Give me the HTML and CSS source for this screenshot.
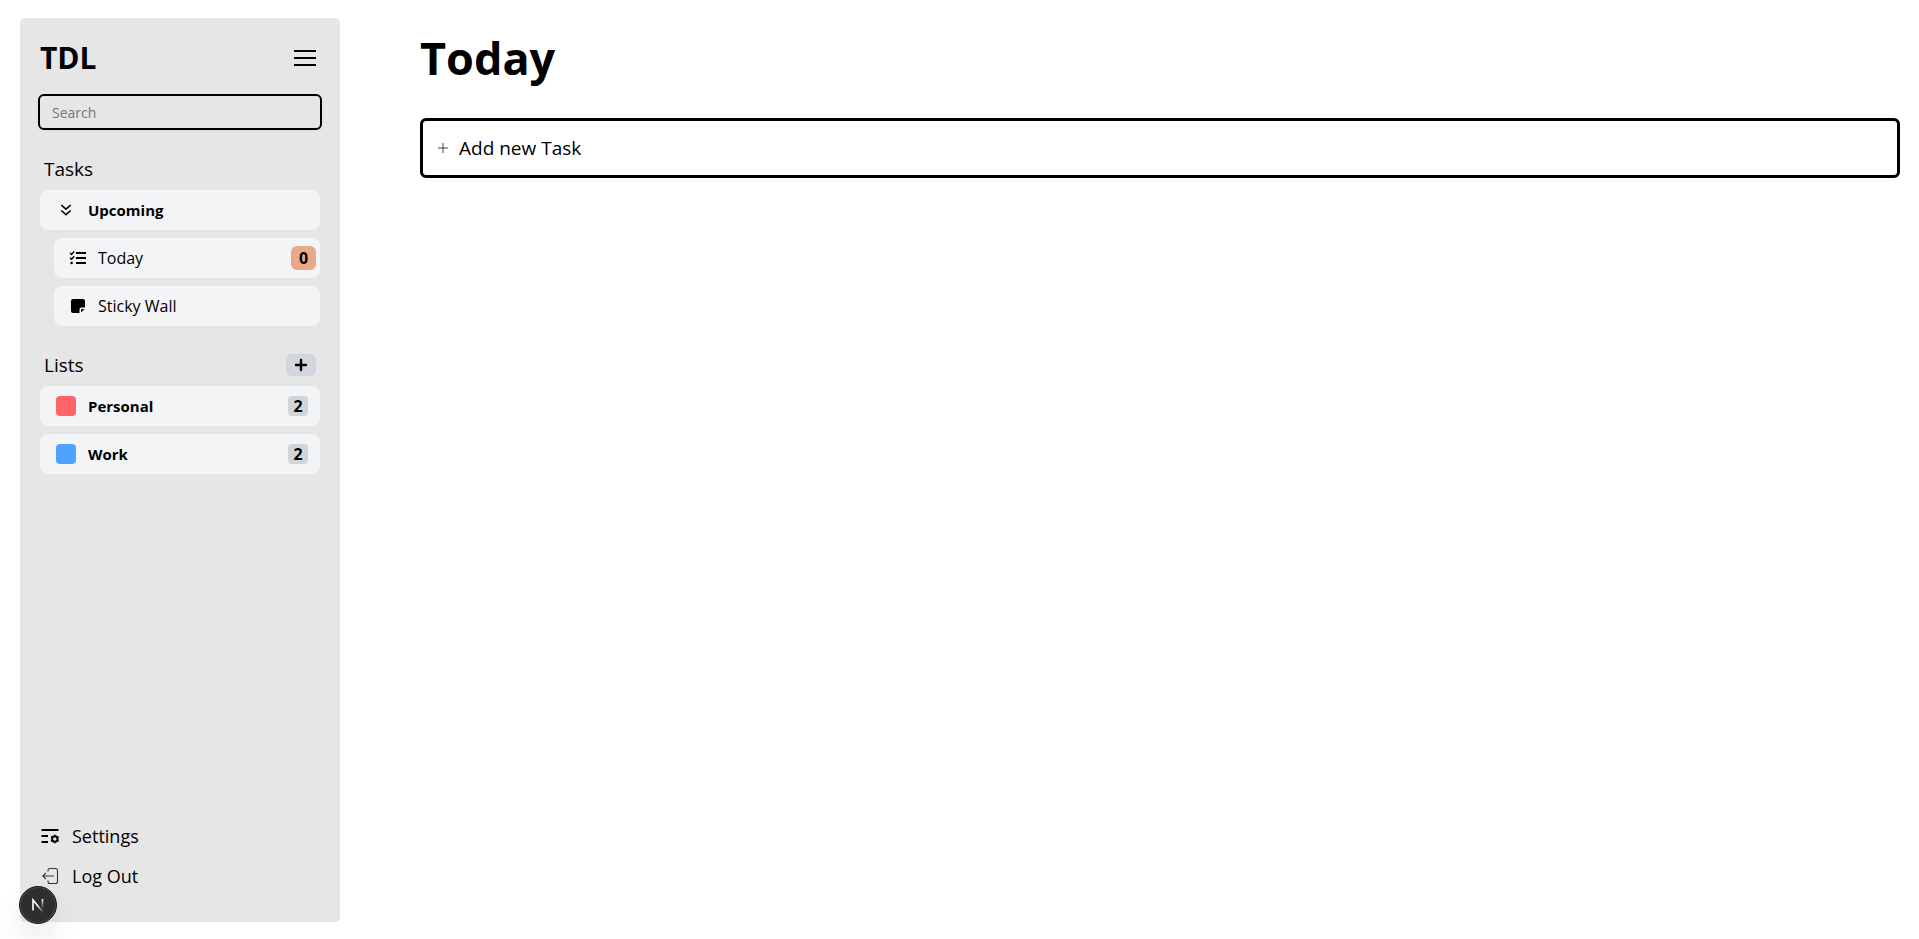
FILE: index.html
```html
<!DOCTYPE html>
<html lang="en">
<head>
<meta charset="utf-8">
<title>TDL</title>
<link rel="stylesheet" href="styles.css">
</head>
<body>
<div class="layout">
  <aside class="sidebar">
    <header class="brand">
      <h2 class="brand-name">TDL</h2>
      <button class="icon-button" type="button" aria-label="Menu">
        <svg width="24" height="20" viewBox="0 0 24 20" fill="none" stroke="currentColor" stroke-width="2"><path d="M1 3h22M1 10h22M1 17h22"/></svg>
      </button>
    </header>
    <input class="search" type="search" placeholder="Search" aria-label="Search">

    <section class="group">
      <div class="group-head"><h3 class="group-title">Tasks</h3></div>
      <ul class="items">
        <li><a class="item" href="#upcoming">
          <span class="item-icon"><svg width="14" height="14" viewBox="0 0 14 14" fill="none" stroke="currentColor" stroke-width="1.6"><path d="M2.3 2l4.7 4.2L11.7 2M2.3 7.5L7 11.7l4.700-4.200"/></svg></span>
          <span class="item-label strong">Upcoming</span></a></li>
        <li><a class="item nested" href="#today">
          <svg class="nested-icon" width="18" height="16" viewBox="0 0 18 16" fill="none" stroke="currentColor"><path stroke-width="2" d="M7 3h10M7 8h10M7 13h10"/><path stroke-width="1.4" d="M1 3l1.5 1.4L5.2 1.4M1 7.8l1.5 1.4 2.700-3"/><circle cx="2.6" cy="13" r="1.3" fill="currentColor" stroke="none"/></svg>
          <span class="item-label">Today</span><span class="count count-today">0</span></a></li>
        <li><a class="item nested" href="#sticky-wall">
          <svg class="nested-icon" width="18" height="16" viewBox="0 0 18 16" fill="currentColor"><path d="M4 1h10a2 2 0 0 1 2 2v6.5h-3.5a2 2 0 0 0-2 2V15H4a2 2 0 0 1-2-2V3a2 2 0 0 1 2-2z"/><path d="M12 14.600v-2.400a1.200 1.200 0 0 1 1.200-1.200h2.400z"/></svg>
          <span class="item-label">Sticky Wall</span></a></li>
      </ul>
    </section>

    <section class="group">
      <div class="group-head">
        <h3 class="group-title">Lists</h3>
        <button class="add-list" type="button" aria-label="Add list"><svg width="14" height="14" viewBox="0 0 14 14" fill="none" stroke="currentColor" stroke-width="2.4" stroke-linecap="round"><path d="M7 2v10M2 7h10"/></svg></button>
      </div>
      <ul class="items">
        <li><a class="item" href="#personal"><span class="item-icon red"></span><span class="item-label strong">Personal</span><span class="count">2</span></a></li>
        <li><a class="item" href="#work"><span class="item-icon blue"></span><span class="item-label strong">Work</span><span class="count">2</span></a></li>
      </ul>
    </section>

    <nav class="account">
      <a class="account-link" href="#settings">
        <svg width="20" height="20" viewBox="0 0 20 20" fill="none" stroke="currentColor" stroke-width="1.8"><path d="M1.5 4h17M1.5 10H8M1.5 16H8"/><circle cx="14.8" cy="13" r="2.7" stroke-width="2"/><path stroke-width="1.6" d="M14.8 8.7v1.6M14.8 15.7v1.6M11 10.8l1.4.8M17.2 14.4l1.4.8M18.6 10.8l-1.4.8M12.4 14.4l-1.4.8"/></svg>
        Settings</a>
      <a class="account-link" href="#logout">
        <svg width="20" height="20" viewBox="0 0 20 20" fill="none" stroke="#333" stroke-width="1.1"><path d="M8 5.5V4.5a2 2 0 0 1 2-2h5.500a2 2 0 0 1 2 2v11a2 2 0 0 1-2 2H10a2 2 0 0 1-2-2v-1M14 10H3M6 6.800L2.800 10 6 13.200"/></svg>
        Log Out</a>
    </nav>
  </aside>

  <main class="content">
    <h1 class="page-title">Today</h1>
    <button class="add-task" type="button">
      <svg width="12" height="12" viewBox="0 0 12 12" fill="none" stroke="#444" stroke-width="1"><path d="M6 1v10M1 6h10"/></svg>
      Add new Task</button>
  </main>
</div>
<button class="dev-badge" type="button" aria-label="Open developer tools">
  <svg width="16" height="16" viewBox="0 0 16 16" fill="none" stroke-width="1.6">
    <defs>
      <linearGradient id="diag" gradientUnits="userSpaceOnUse" x1="8" y1="8" x2="14" y2="15"><stop stop-color="#fff"/><stop offset="1" stop-color="#fff" stop-opacity="0"/></linearGradient>
      <linearGradient id="stem" gradientUnits="userSpaceOnUse" x1="12" y1="2" x2="12" y2="12"><stop stop-color="#fff"/><stop offset="1" stop-color="#fff" stop-opacity="0"/></linearGradient>
    </defs>
    <path stroke="url(#diag)" d="M3 13.500V3l9.800 12"/><path stroke="url(#stem)" d="M12.500 2v9.500"/>
  </svg>
</button>
</body>
</html>
```

FILE: styles.css
```css
* { box-sizing: border-box; }

body {
  margin: 0;
  background: #fff;
  color: #000;
  font-family: "Segoe UI", "Open Sans", "Noto Sans", sans-serif;
  font-size: 16px;
  line-height: 24px;
}

h1, h2, h3, ul { margin: 0; padding: 0; }
ul { list-style: none; }
a { color: inherit; text-decoration: none; }
button, input { font: inherit; color: inherit; }
svg { flex: none; display: block; }

.layout { display: flex; gap: 80px; min-height: 100vh; padding: 18px 19px 17px 20px; }

.sidebar {
  display: flex;
  flex-direction: column;
  flex: none;
  width: 320px;
  padding: 20px 20px 32px;
  border-radius: 5px;
  background: #e6e6e6;
}

.brand { display: flex; align-items: center; justify-content: space-between; height: 40px; padding-right: 3px; }
.brand-name { font-size: 30px; line-height: 36px; font-weight: 700; }
.icon-button { padding: 0; border: 0; background: none; }

.search {
  height: 36px;
  margin: 16px -2px 0;
  padding: 0 12px;
  border: 2px solid #000;
  border-radius: 6px;
  background: transparent;
  box-shadow: 0 1px 2px rgba(0, 0, 0, .05);
  font-size: 14px;
  outline: 0;
}
.search::placeholder { color: #757575; }

.group { margin-top: 24px; }
.group-head { display: flex; align-items: center; justify-content: space-between; height: 30px; padding: 0 4px; }
.group-title { font-size: 19px; line-height: 28px; font-weight: 500; }
.items { display: grid; gap: 8px; margin-top: 6px; }

.item { display: flex; align-items: center; height: 40px; padding: 0 12px 0 16px; border-radius: 8px; background: #f3f4f6; }
.item-icon { display: grid; place-items: center; width: 20px; height: 20px; margin-right: 12px; border-radius: 4px; }
.item-label { flex: 1; font-size: 16px; font-weight: 500; }
.strong { font-size: 15px; font-weight: 700; }
.red { background: #ff6467; }
.blue { background: #50a2ff; }
.nested { margin-left: 14px; padding: 0 4px 0 15px; }
.nested-icon { margin-right: 11px; }

.count { width: 20px; border-radius: 4px; background: #d1d5dc; font-size: 16px; line-height: 20px; font-weight: 700; text-align: center; }
.count-today { width: 25px; border-radius: 6px; background: #e9a987; line-height: 24px; }

.add-list { display: grid; place-items: center; width: 30px; height: 22px; padding: 0; border: 0; border-radius: 6px; background: #d1d5dc; }

.account { display: grid; gap: 12px; margin-top: auto; }
.account-link { display: flex; align-items: center; gap: 12px; font-size: 18px; line-height: 28px; font-weight: 500; }

.content { flex: 1; min-width: 0; }
.page-title { font-size: 45px; line-height: 60px; font-weight: 700; margin-top: 10px; }

.add-task {
  display: flex;
  align-items: center;
  gap: 10px;
  width: 100%;
  height: 60px;
  margin-top: 30px;
  padding: 0 14px;
  border: 3px solid #000;
  border-radius: 6px;
  background: #fff;
  font-size: 19px;
  font-weight: 500;
  text-align: left;
}

.dev-badge {
  position: fixed;
  left: 19px;
  bottom: 15px;
  display: grid;
  place-items: center;
  width: 38px;
  height: 38px;
  padding: 0;
  border: 1px solid #171717;
  border-radius: 50%;
  background: #2e2e2e;
  box-shadow: inset 0 0 0 1px #4a4a4a, 0 16px 32px -8px rgba(0, 0, 0, .24);
}
```
